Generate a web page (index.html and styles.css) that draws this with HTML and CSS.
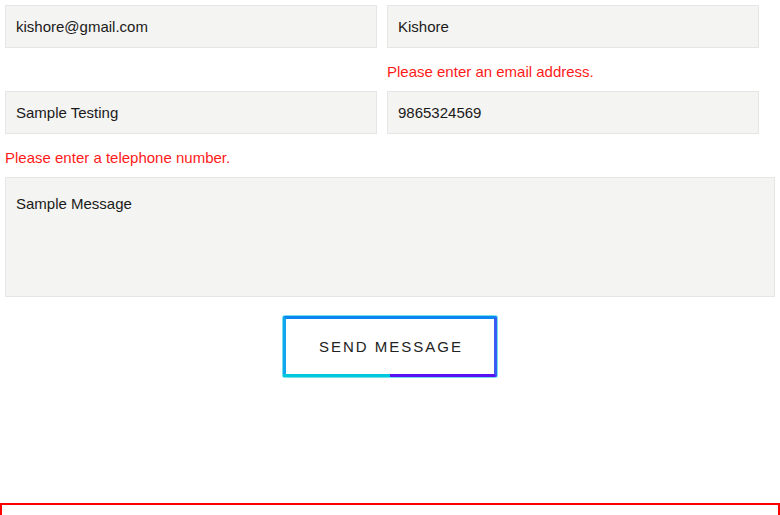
FILE: index.html
```html
<!DOCTYPE html>
<html>
<head>
<meta charset="utf-8">
<link rel="stylesheet" href="styles.css">
</head>
<body>
<form class="contact">
  <div class="row">
    <input class="field" type="text" value="kishore@gmail.com">
    <input class="field" type="text" value="Kishore">
  </div>
  <div class="row errors">
    <span></span>
    <span class="error">Please enter an email address.</span>
  </div>
  <div class="row">
    <input class="field" type="text" value="Sample Testing">
    <input class="field" type="text" value="9865324569">
  </div>
  <div class="row errors">
    <span class="error wide">Please enter a telephone number.</span>
  </div>
  <textarea class="message">Sample Message</textarea>
  <div class="actions">
    <button type="button" class="send">SEND MESSAGE</button>
  </div>
</form>
<div class="outlined"></div>
</body>
</html>
```
FILE: styles.css
```css
html, body {
  margin: 0;
  padding: 0;
  background: #fff;
}
body {
  font-family: "Liberation Sans", Arial, sans-serif;
  width: 780px;
  height: 515px;
  overflow: hidden;
}
.contact {
  padding: 5px 5px 0 5px;
  width: 770px;
}
.row {
  display: grid;
  grid-template-columns: 372px 372px;
  column-gap: 10px;
}
.field {
  box-sizing: border-box;
  height: 43px;
  width: 372px;
  margin: 0;
  padding: 0 10px;
  border: 1px solid #e6e6e6;
  background: #f4f4f2;
  font-family: "Liberation Sans", Arial, sans-serif;
  font-size: 15px;
  color: #1a1a1a;
  outline: none;
}
.errors {
  height: 43px;
  box-sizing: border-box;
  padding-top: 15px;
}
.error {
  color: #ff1a1a;
  font-size: 15px;
  line-height: 18px;
  white-space: nowrap;
}
.error.wide {
  grid-column: 1 / span 2;
}
.message {
  display: block;
  box-sizing: border-box;
  width: 770px;
  height: 120px;
  margin: 0;
  padding: 17px 10px;
  border: 1px solid #e6e6e6;
  background: #f4f4f2;
  font-family: "Liberation Sans", Arial, sans-serif;
  font-size: 15px;
  line-height: 18px;
  color: #1a1a1a;
  resize: none;
  outline: none;
}
.actions {
  display: flex;
  justify-content: center;
  padding-top: 19px;
}
.send {
  position: relative;
  box-sizing: border-box;
  width: 214px;
  height: 61px;
  margin: 0;
  padding: 0 0 0 2px;
  background: #fff;
  border: 3px solid;
  border-color: #0a86f2 #3a5cf4 #5a10f0 #12a6f0;
  border-radius: 2px;
  box-shadow: 0 0 0 1px rgba(0, 200, 220, 0.55);
  font-family: "Liberation Sans", Arial, sans-serif;
  font-size: 15px;
  letter-spacing: 2px;
  color: #222;
}
.send::after {
  content: "";
  position: absolute;
  left: -3px;
  bottom: -3px;
  width: 107px;
  height: 3px;
  background: #00c8dc;
}
.outlined {
  box-sizing: border-box;
  margin-top: 126px;
  width: 780px;
  height: 12px;
  border: 2px solid #ff0000;
  border-bottom: none;
}
```
